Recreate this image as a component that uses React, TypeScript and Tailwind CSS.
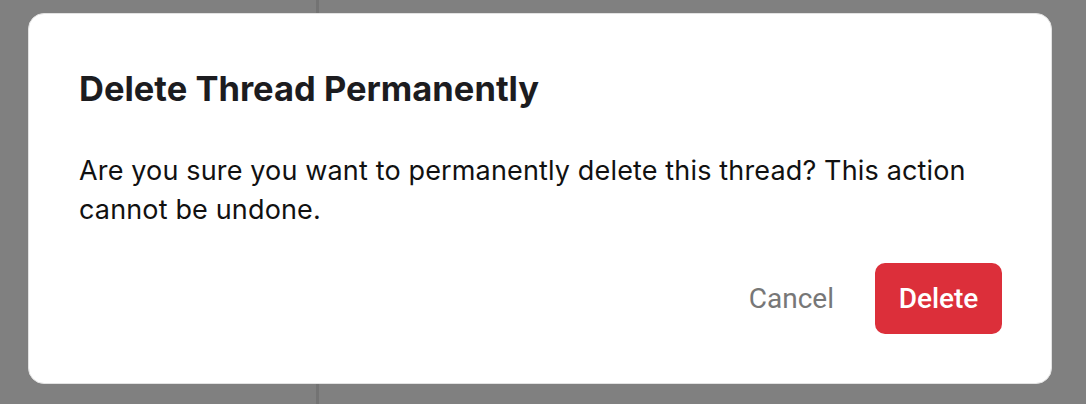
export default function App() {
  return (
    <div className="relative w-[1086px] h-[404px] bg-[#808080] overflow-hidden flex">
      <div className="w-[319px] h-full border-r-[3px] border-[#737373]" />
      <div className="absolute left-[28px] top-[13px] w-[1024px] h-[371px] bg-white rounded-[16px] border border-[#e2e2e2] pl-[50px] pr-[49px] pt-[54px] pb-[49px] flex flex-col">
        <h2 className="text-[34.5px] leading-[42px] font-bold text-[#1c1c1f] font-['Inter',sans-serif]">
          Delete Thread Permanently
        </h2>
        <p className="mt-[41px] text-[27px] leading-[39px] tracking-[0.15px] text-[#111111] font-['Inter',sans-serif]">
          Are you sure you want to permanently delete this thread? This action cannot be undone.
        </p>
        <div className="mt-auto flex items-center justify-end gap-[41px]">
          <button className="text-[28px] text-[#777777] font-['Roboto',sans-serif]">Cancel</button>
          <button className="w-[127px] h-[71px] rounded-[10px] bg-[#dc2f3a] text-white text-[28px] font-medium font-['Roboto',sans-serif]">
            Delete
          </button>
        </div>
      </div>
    </div>
  );
}
